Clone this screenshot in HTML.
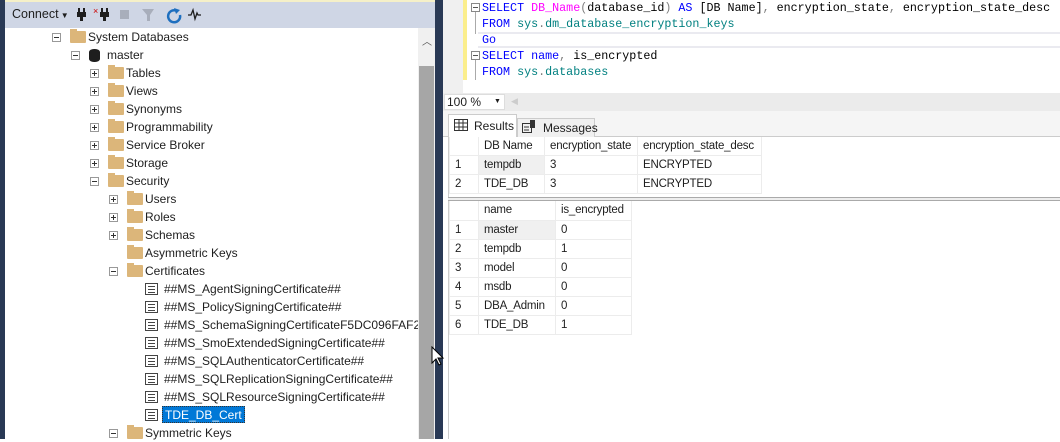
<!DOCTYPE html>
<html><head><style>
*{margin:0;padding:0;box-sizing:border-box}
body{width:1060px;height:439px;overflow:hidden;position:relative;background:#fff;font-family:"Liberation Sans",sans-serif;font-size:12px;color:#1e1e1e}
.a{position:absolute}
.row{position:absolute;height:18px;line-height:18px;white-space:nowrap}
.exp{position:absolute;width:9px;height:9px;border:1px solid #999;background:#fff;top:5px}
.exp:before{content:"";position:absolute;left:1px;top:3px;width:5px;height:1px;background:#333}
.exp.p:after{content:"";position:absolute;left:3px;top:1px;width:1px;height:5px;background:#333}
.fold{position:absolute;width:16px;height:12px;top:3px;background:#dcb67a;border-radius:1px}
.fold:before{content:"";position:absolute;left:0;top:-2px;width:7px;height:3px;background:#dcb67a}
.cert{position:absolute;width:13px;height:12px;top:3px;border:1px solid #444;background:#fff}
.cert:before{content:"";position:absolute;left:2px;top:2px;width:7px;height:1px;background:#444;box-shadow:0 3px 0 #444,0 6px 0 #444}
.code{position:absolute;left:482px;font-family:"Liberation Mono",monospace;font-size:11.7px;line-height:16px;white-space:pre}
.k{color:#0000ff}.f{color:#ff00ff}.g{color:#008080}.s{color:#808080}.n{color:#000}
table{border-collapse:collapse;position:absolute;font-size:11.5px;letter-spacing:-0.2px;table-layout:fixed}
td{height:19px;border:1px solid #ececec;padding:0 0 0 5px;white-space:nowrap;overflow:hidden}
</style></head><body>
<div class="a" style="left:0;top:0;width:5px;height:439px;background:#293955"></div>
<div class="a" style="left:5px;top:0;width:430px;height:28px;background:#cfd6e5;border-top:2px solid #f5f0c8"></div>
<div class="a" style="left:12px;top:7px;font-size:12.5px;color:#1e1e1e">Connect<span style="font-size:8px"> ▼</span></div>
<svg class="a" style="left:75px;top:6px" width="140" height="18">
<g fill="#1e1e1e"><rect x="3" y="2" width="2" height="4"/><rect x="8" y="2" width="2" height="4"/><rect x="2" y="6" width="9" height="5"/><rect x="5" y="11" width="3" height="4"/></g>
<g fill="#1e1e1e"><rect x="26" y="2" width="2" height="4"/><rect x="31" y="2" width="2" height="4"/><rect x="25" y="6" width="9" height="5"/><rect x="28" y="11" width="3" height="4"/></g>
<text x="18" y="8" font-size="9" fill="#c00" font-family="Liberation Sans">×</text>
<rect x="45" y="4" width="9" height="9" fill="#a8aebb"/>
<path d="M67 3h12l-4 6v6h-3v-6z" fill="#a8aebb"/>
<path d="M102 5a6 6 0 1 0 3 4" stroke="#1e6fbf" stroke-width="2.5" fill="none"/><path d="M99 2l6 2-4 4z" fill="#1e6fbf"/>
<path d="M113 9h3l2-5 2 9 2-6 1 2h3" stroke="#1e1e1e" stroke-width="1.3" fill="none"/>
</svg>
<div class="a" style="left:5px;top:28px;width:413px;height:411px;background:#fff"></div>
<div class="a" style="left:418px;top:28px;width:17px;height:411px;background:#f0f0f0"></div>
<div class="a" style="left:422px;top:33px;font-size:10px;color:#555">︿</div>
<div class="a" style="left:419px;top:66px;width:15px;height:373px;background:#a6a6a6"></div>
<div class="a" style="left:435px;top:0;width:8px;height:439px;background:#293955"></div>
<svg class="a" style="left:431px;top:346px" width="14" height="22"><path d="M1 1v16l4-4 3 6 2-1-3-6h5z" fill="#fff" stroke="#000"/></svg>

<div class="row" style="top:28px;left:0"><div class="exp" style="left:52px"></div><div class="fold" style="left:70px"></div><span class="a" style="left:88px">System Databases</span></div>
<div class="row" style="top:46px;left:0"><div class="exp" style="left:71px"></div><div class="a" style="left:89px;top:3px;width:11px;height:13px;background:#1e1e1e;border-radius:5px/3px"></div><span class="a" style="left:107px">master</span></div>
<div class="row" style="top:64px;left:0"><div class="exp p" style="left:90px"></div><div class="fold" style="left:108px"></div><span class="a" style="left:126px">Tables</span></div>
<div class="row" style="top:82px;left:0"><div class="exp p" style="left:90px"></div><div class="fold" style="left:108px"></div><span class="a" style="left:126px">Views</span></div>
<div class="row" style="top:100px;left:0"><div class="exp p" style="left:90px"></div><div class="fold" style="left:108px"></div><span class="a" style="left:126px">Synonyms</span></div>
<div class="row" style="top:118px;left:0"><div class="exp p" style="left:90px"></div><div class="fold" style="left:108px"></div><span class="a" style="left:126px">Programmability</span></div>
<div class="row" style="top:136px;left:0"><div class="exp p" style="left:90px"></div><div class="fold" style="left:108px"></div><span class="a" style="left:126px">Service Broker</span></div>
<div class="row" style="top:154px;left:0"><div class="exp p" style="left:90px"></div><div class="fold" style="left:108px"></div><span class="a" style="left:126px">Storage</span></div>
<div class="row" style="top:172px;left:0"><div class="exp" style="left:90px"></div><div class="fold" style="left:108px"></div><span class="a" style="left:126px">Security</span></div>
<div class="row" style="top:190px;left:0"><div class="exp p" style="left:109px"></div><div class="fold" style="left:127px"></div><span class="a" style="left:145px">Users</span></div>
<div class="row" style="top:208px;left:0"><div class="exp p" style="left:109px"></div><div class="fold" style="left:127px"></div><span class="a" style="left:145px">Roles</span></div>
<div class="row" style="top:226px;left:0"><div class="exp p" style="left:109px"></div><div class="fold" style="left:127px"></div><span class="a" style="left:145px">Schemas</span></div>
<div class="row" style="top:244px;left:0"><div class="fold" style="left:127px"></div><span class="a" style="left:145px">Asymmetric Keys</span></div>
<div class="row" style="top:262px;left:0"><div class="exp" style="left:109px"></div><div class="fold" style="left:127px"></div><span class="a" style="left:145px">Certificates</span></div>
<div class="row" style="top:280px;left:0"><div class="cert" style="left:145px"></div><span class="a" style="left:164px">##MS_AgentSigningCertificate##</span></div>
<div class="row" style="top:298px;left:0"><div class="cert" style="left:145px"></div><span class="a" style="left:164px">##MS_PolicySigningCertificate##</span></div>
<div class="row" style="top:316px;left:0;width:418px;overflow:hidden"><div class="cert" style="left:145px"></div><span class="a" style="left:164px">##MS_SchemaSigningCertificateF5DC096FAF20C</span></div>
<div class="row" style="top:334px;left:0"><div class="cert" style="left:145px"></div><span class="a" style="left:164px">##MS_SmoExtendedSigningCertificate##</span></div>
<div class="row" style="top:352px;left:0"><div class="cert" style="left:145px"></div><span class="a" style="left:164px">##MS_SQLAuthenticatorCertificate##</span></div>
<div class="row" style="top:370px;left:0"><div class="cert" style="left:145px"></div><span class="a" style="left:164px">##MS_SQLReplicationSigningCertificate##</span></div>
<div class="row" style="top:388px;left:0"><div class="cert" style="left:145px"></div><span class="a" style="left:164px">##MS_SQLResourceSigningCertificate##</span></div>
<div class="row" style="top:406px;left:0"><div class="cert" style="left:145px"></div><span class="a" style="left:162px;background:#0078d7;color:#fff;padding:0 2px;height:17px;line-height:17px;border:1px dotted #333">TDE_DB_Cert</span></div>
<div class="row" style="top:424px;left:0"><div class="exp" style="left:109px"></div><div class="fold" style="left:127px"></div><span class="a" style="left:145px">Symmetric Keys</span></div>

<div class="a" style="left:443px;top:0;width:20px;height:93px;background:#f0f0f0"></div>
<div class="a" style="left:463px;top:0;width:4px;height:80px;background:#fbee8c"></div>
<div class="a" style="left:478px;top:32px;width:582px;height:16px;background:#fff;border-top:2px solid #eaeaf0;border-bottom:2px solid #eaeaf0"></div>
<div class="a" style="left:471px;top:3px;width:9px;height:9px;border:1px solid #888"></div><div class="a" style="left:473px;top:7px;width:5px;height:1px;background:#555"></div>
<div class="a" style="left:475px;top:12px;width:1px;height:22px;background:#aaa"></div>
<div class="a" style="left:471px;top:51px;width:9px;height:9px;border:1px solid #888"></div><div class="a" style="left:473px;top:55px;width:5px;height:1px;background:#555"></div>
<div class="a" style="left:475px;top:60px;width:1px;height:20px;background:#aaa"></div>
<div class="code" style="top:0"><span class="k">SELECT</span> <span class="f">DB_Name</span><span class="s">(</span><span class="n">database_id</span><span class="s">)</span> <span class="k">AS</span> <span class="n">[DB Name]</span><span class="s">,</span> <span class="n">encryption_state</span><span class="s">,</span> <span class="n">encryption_state_desc</span>
<span class="k">FROM</span> <span class="g">sys</span><span class="s">.</span><span class="g">dm_database_encryption_keys</span>
<span class="k">Go</span>
<span class="k">SELECT</span> <span class="k">name</span><span class="s">,</span> <span class="n">is_encrypted</span>
<span class="k">FROM</span> <span class="g">sys</span><span class="s">.</span><span class="g">databases</span></div>

<div class="a" style="left:443px;top:93px;width:617px;height:18px;background:#ebebeb"></div>
<div class="a" style="left:444px;top:94px;width:61px;height:16px;background:#fff;border:1px solid #ddd;font-size:12px;line-height:14px;padding-left:2px">100 %<span style="position:absolute;left:49px;top:0;font-size:7px">▼</span></div>
<div class="a" style="left:511px;top:96px;font-size:9px;color:#ccc">◀</div>
<div class="a" style="left:443px;top:111px;width:617px;height:26px;background:#f5f5f5;border-bottom:1px solid #ccc"></div>
<div class="a" style="left:448px;top:114px;width:69px;height:24px;background:#fff;border:1px solid #ccc;border-bottom:none;line-height:22px;padding-left:25px">Results</div>
<svg class="a" style="left:454px;top:119px" width="14" height="12"><rect x="0.5" y="0.5" width="13" height="11" fill="none" stroke="#333"/><path d="M0 4h14M0 8h14M5 0v12M9 0v12" stroke="#333"/></svg>
<div class="a" style="left:517px;top:118px;width:78px;height:19px;background:#f0f0f0;border:1px solid #ccc;border-bottom:none;line-height:18px;padding-left:25px">Messages</div>
<svg class="a" style="left:522px;top:120px" width="14" height="13"><rect x="0.5" y="3.5" width="9" height="9" fill="none" stroke="#333"/><rect x="8" y="0" width="5" height="8" fill="#333"/><path d="M2 7h5M2 10h5" stroke="#333"/></svg>
<div class="a" style="left:448px;top:137px;width:612px;height:60px;background:#fff;border-left:1px solid #ccc"></div>
<table style="left:449px;top:137px;width:312px">
<colgroup><col style="width:29px"><col style="width:66px"><col style="width:93px"><col style="width:124px"></colgroup>
<tr><td style="border-top:none;height:18px"></td><td style="border-top:none;height:18px">DB Name</td><td style="border-top:none;height:18px">encryption_state</td><td style="border-top:none;height:18px">encryption_state_desc</td></tr>
<tr><td>1</td><td style="border:1px dotted #333;background:#f0f0f0">tempdb</td><td>3</td><td>ENCRYPTED</td></tr>
<tr><td>2</td><td>TDE_DB</td><td>3</td><td>ENCRYPTED</td></tr>
</table>
<div class="a" style="left:448px;top:197px;width:612px;height:4px;background:#eee;border-top:1px solid #aaa;border-bottom:1px solid #aaa"></div>
<div class="a" style="left:448px;top:201px;width:1px;height:238px;background:#ccc"></div>
<table style="left:449px;top:201px;width:182px">
<colgroup><col style="width:29px"><col style="width:77px"><col style="width:76px"></colgroup>
<tr><td style="border-top:none"></td><td style="border-top:none">name</td><td style="border-top:none">is_encrypted</td></tr>
<tr><td>1</td><td style="border:1px dotted #333;background:#f0f0f0">master</td><td>0</td></tr>
<tr><td>2</td><td>tempdb</td><td>1</td></tr>
<tr><td>3</td><td>model</td><td>0</td></tr>
<tr><td>4</td><td>msdb</td><td>0</td></tr>
<tr><td>5</td><td>DBA_Admin</td><td>0</td></tr>
<tr><td>6</td><td>TDE_DB</td><td>1</td></tr>
</table>
</body></html>
